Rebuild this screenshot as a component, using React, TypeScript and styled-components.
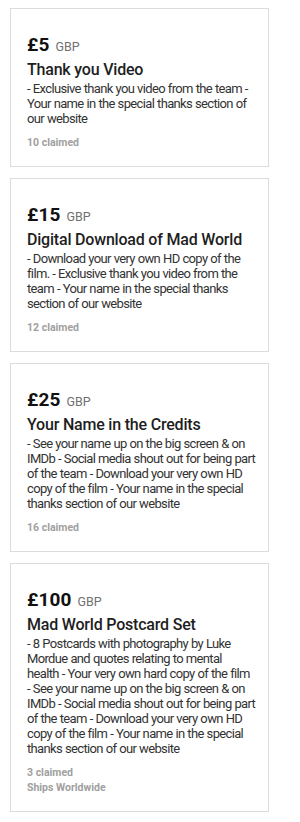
import React from 'react';
import styled, { createGlobalStyle } from 'styled-components';

const GlobalStyle = createGlobalStyle`
  html, body {
    margin: 0;
    padding: 0;
    background: #ffffff;
  }
  body {
    font-family: Roboto, "Liberation Sans", Arial, sans-serif;
    -webkit-font-smoothing: antialiased;
  }
`;

const Page = styled.div`
  width: 300px;
  min-height: 822px;
  box-sizing: border-box;
  padding: 8px 0 0 10px;
  display: flex;
  flex-direction: column;
  gap: 11px;
`;

const Card = styled.div`
  width: 259px;
  box-sizing: border-box;
  border: 1px solid #dcdcdc;
  background: #fff;
  padding: 26px 12px 16px 16px;
  display: flex;
  flex-direction: column;
`;

const PriceRow = styled.div`
  display: flex;
  align-items: baseline;
  gap: 6px;
  line-height: 20px;
`;

const Amount = styled.span`
  font-size: 19px;
  font-weight: 700;
  color: #111;
  letter-spacing: 0.1px;
`;

const Currency = styled.span`
  font-size: 12.5px;
  color: #707070;
`;

const Title = styled.h3`
  margin: 3px 0 0;
  font-size: 16px;
  font-weight: 500;
  line-height: 20px;
  color: #1e1e1e;
  letter-spacing: -0.2px;
`;

const Description = styled.p`
  margin: 1px 0 0;
  font-size: 13px;
  line-height: 15px;
  color: #333;
  letter-spacing: -0.65px;
  word-spacing: 0.3px;
`;

const Meta = styled.div`
  margin-top: 9px;
  display: flex;
  flex-direction: column;
`;

const MetaLine = styled.span`
  font-size: 10.5px;
  font-weight: 700;
  line-height: 15px;
  color: #a0a0a0;
`;

interface Reward {
  amount: string;
  title: string;
  description: string;
  meta: string[];
}

const rewards: Reward[] = [
  {
    amount: '£5',
    title: 'Thank you Video',
    description:
      '- Exclusive thank you video from the team - Your name in the special thanks section of our website',
    meta: ['10 claimed'],
  },
  {
    amount: '£15',
    title: 'Digital Download of Mad World',
    description:
      '- Download your very own HD copy of the film. - Exclusive thank you video from the team - Your name in the special thanks section of our website',
    meta: ['12 claimed'],
  },
  {
    amount: '£25',
    title: 'Your Name in the Credits',
    description:
      '- See your name up on the big screen & on IMDb - Social media shout out for being part of the team - Download your very own HD copy of the film - Your name in the special thanks section of our website',
    meta: ['16 claimed'],
  },
  {
    amount: '£100',
    title: 'Mad World Postcard Set',
    description:
      '- 8 Postcards with photography by Luke Mordue and quotes relating to mental health - Your very own hard copy of the film -\u2060\u00a0See your name up on the big screen & on IMDb - Social media shout out for being part of the team - Download your very own HD copy of the film - Your name in the special thanks section of our website',
    meta: ['3 claimed', 'Ships Worldwide'],
  },
];

const RewardCard: React.FC<{ reward: Reward }> = ({ reward }) => (
  <Card>
    <PriceRow>
      <Amount>{reward.amount}</Amount>
      <Currency>GBP</Currency>
    </PriceRow>
    <Title>{reward.title}</Title>
    <Description>{reward.description}</Description>
    <Meta>
      {reward.meta.map((m) => (
        <MetaLine key={m}>{m}</MetaLine>
      ))}
    </Meta>
  </Card>
);

const App: React.FC = () => (
  <>
    <GlobalStyle />
    <Page>
      {rewards.map((r) => (
        <RewardCard key={r.amount} reward={r} />
      ))}
    </Page>
  </>
);

export default App;
